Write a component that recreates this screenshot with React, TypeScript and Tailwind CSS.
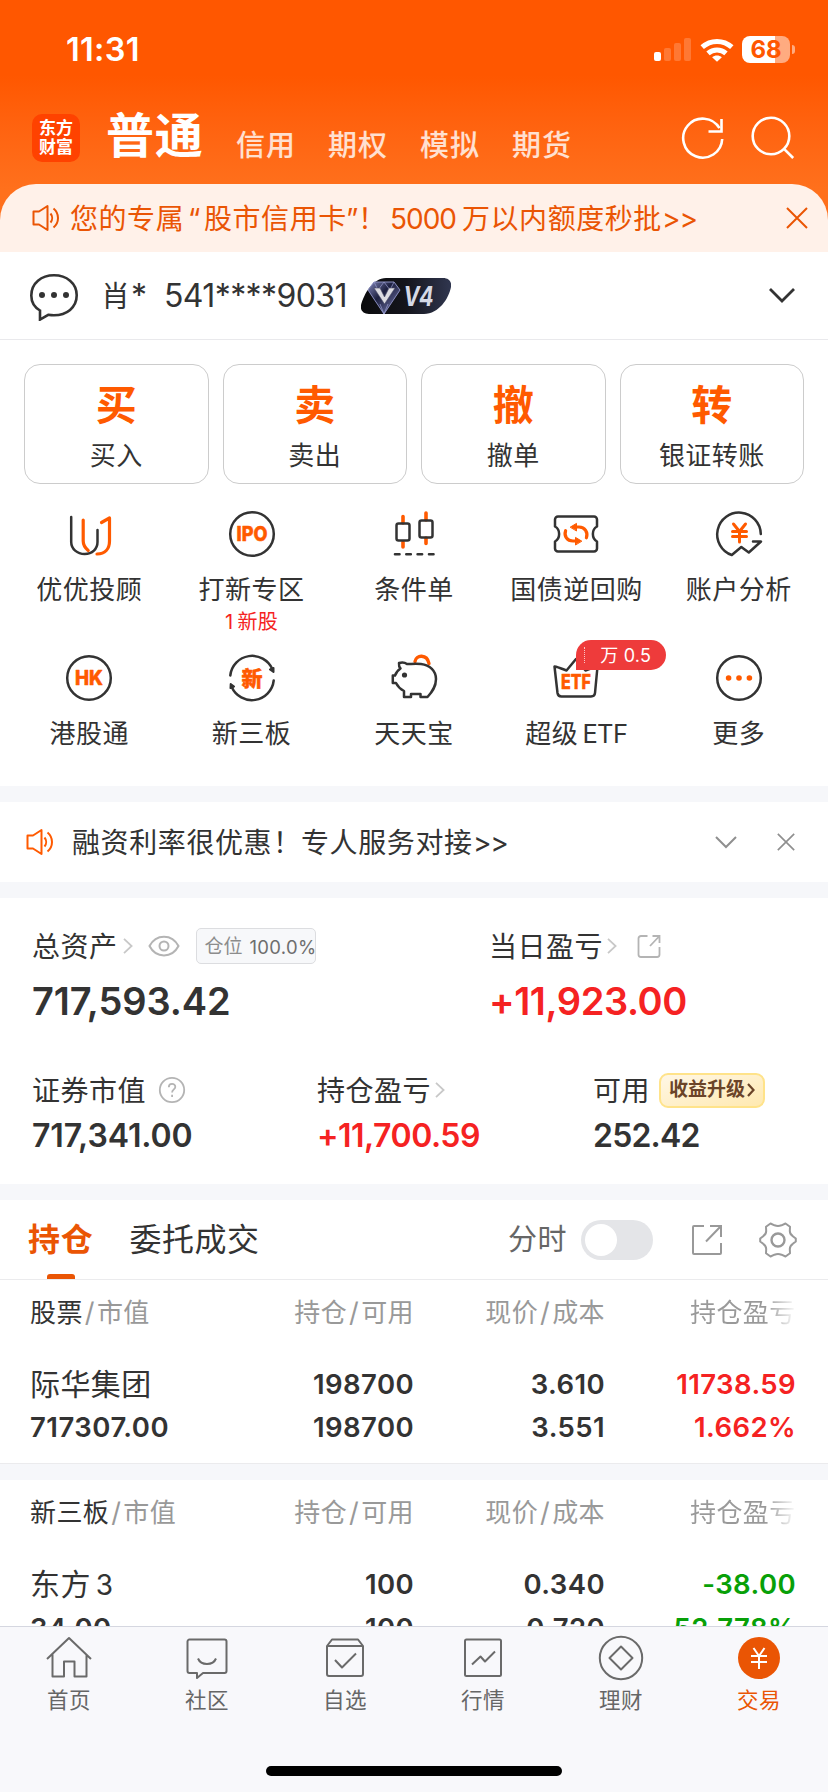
import React from 'react';
import clsx from 'clsx';

interface ShortcutItem {
  label: React.ReactNode;
  icon: React.ReactNode;
  note?: React.ReactNode;
  badge?: string;
}

interface HoldingRow {
  name: React.ReactNode;
  value: string;
  amount: [string, string];
  price: [string, string];
  profit: [string, string];
  down?: boolean;
}

const ACCENT = '#ff5a00';
const INK = '#333333';

function Speaker({ className }: { className?: string }) {
  return (
    <svg viewBox="0 0 28 28" fill="none" stroke="currentColor" strokeWidth="2" className={className}>
      <path d="M1.5 7.5H7L15.5 2v24L7 20.5H1.5z" strokeLinejoin="round" />
      <path d="M18.5 9.5c2.2 2.6 2.2 6.4 0 9M21.500 4.500c6 5 6 14 0 19" />
    </svg>
  );
}

function Cross({ className }: { className?: string }) {
  return (
    <svg viewBox="0 0 22 22" fill="none" stroke="currentColor" strokeWidth="2" className={className}>
      <path d="M1 1l20 20M21 1L1 21" />
    </svg>
  );
}

function ArrowRight() {
  return (
    <svg viewBox="0 0 10 16" fill="none" stroke="#c8c8c8" strokeWidth="1.8" className="h-4 w-2.5 shrink-0">
      <path d="M1 .8L8.6 8 1 15.2" />
    </svg>
  );
}

function StatusBar() {
  return (
    <div className="flex h-[99px] items-center justify-between pl-[66px] pr-[33px]">
      <span className="text-[32.5px] leading-8 font-semibold tracking-[0.3px] text-white">11:31</span>
      <div className="flex items-center">
        <svg viewBox="0 0 37 23" fill="#fff" className="mr-[9px] h-[23px] w-[37px]">
          <rect x="0" y="14" width="7" height="9" rx="2" />
          <rect x="10" y="10" width="7" height="13" rx="2" opacity=".2" />
          <rect x="20" y="5" width="7" height="18" rx="2" opacity=".2" />
          <rect x="30" y="0" width="7" height="23" rx="2" opacity=".2" />
        </svg>
        <svg viewBox="0 0 34 24" fill="none" stroke="#fff" strokeWidth="5" className="mr-[8px] h-6 w-[34px]">
          <path d="M2.2 9.2c8.4-7.7 21.2-7.7 29.6 0" />
          <path d="M8 15.4c5.2-4.6 12.8-4.6 18 0" />
          <path d="M17 23.8l-4.9-4.6c2.8-2.3 7-2.3 9.8 0z" fill="#fff" stroke="none" />
        </svg>
        <div className="flex h-[27px] w-12 items-center justify-center rounded-[8px] bg-linear-to-r from-white from-69% to-[#ffab80] to-69% text-[24px] leading-none font-bold text-[#ff5700]">
          68
        </div>
        <div className="ml-[2px] h-[9px] w-[3px] rounded-r-full bg-white/50" />
      </div>
    </div>
  );
}

function Header() {
  return (
    <div className="flex h-[85px] pl-8">
      <div className="mt-[15px] flex h-12 w-12 flex-col items-center justify-center rounded-[10px] bg-[#ff4200] text-[17px] leading-[19px] font-bold text-white">
        <span>东方</span>
        <span>财富</span>
      </div>
      <span className="mt-[7px] ml-[26px] w-[97px] text-[48px] leading-[60px] font-semibold tracking-[0.8px] whitespace-nowrap text-white">普通</span>
      <div className="mt-[27px] ml-[33px] flex gap-8 text-[29px] leading-10 font-medium tracking-[1px] text-white/80">
        <span>信用</span>
        <span>期权</span>
        <span>模拟</span>
        <span>期货</span>
      </div>
      <svg viewBox="0 0 44 44" fill="none" stroke="#fff" strokeWidth="2.6" className="mt-[17px] ml-[109px] h-11 w-11">
        <path d="M41.2 23A19.5 19.5 0 1 1 38.5 12.2" />
        <path d="M40.5 3v12.5H27.5" />
      </svg>
      <svg viewBox="0 0 44 44" fill="none" stroke="#fff" strokeWidth="2.6" className="mt-[17px] ml-[26px] h-11 w-11">
        <circle cx="20" cy="20" r="18.3" />
        <path d="M33 32.8l9.2 9.2" />
      </svg>
    </div>
  );
}

function Banner() {
  return (
    <div className="flex h-[68px] items-center rounded-t-[36px] bg-[#fff1e9] pl-8 text-[#ea5504]">
      <Speaker className="h-7 w-7" />
      <div className="ml-[10px] flex pt-px text-[28px] leading-10 tracking-[0.55px] whitespace-nowrap">
        <span className="w-[118px]">您的专属</span>
        <span className="w-[16px]">“</span>
        <span className="w-[142px]">股市信用卡</span>
        <span className="w-[12px]">”</span>
        <span className="w-[32px]">！</span>
        <span className="w-[72px] tracking-[-1px]">5000</span>
        <span className="w-[200px]">万以内额度秒批</span>
        <span className="tracking-[-1px]">&gt;&gt;</span>
      </div>
      <Cross className="mr-5 ml-auto h-[22px] w-[22px]" />
    </div>
  );
}

function LevelBadge() {
  return (
    <svg viewBox="0 0 90 36" className="ml-[16px] h-9 w-[90px]">
      <defs>
        <linearGradient id="level" x1="0" x2="1">
          <stop offset="0" stopColor="#0b0b0d" />
          <stop offset=".5" stopColor="#14151c" />
          <stop offset="1" stopColor="#30364f" />
        </linearGradient>
        <linearGradient id="gem" x1="0" x2="1" y1="0" y2="1">
          <stop offset="0" stopColor="#8286b8" />
          <stop offset=".4" stopColor="#1d2040" />
          <stop offset="1" stopColor="#7f83b8" />
        </linearGradient>
      </defs>
      <path d="M25 0h57c6 0 9 4 8 9-2 11-12 27-27 27H8c-6 0-9-4-8-9C3 16 12 0 25 0z" fill="url(#level)" />
      <path d="M13 4h20l6 8-16 24L7 12z" fill="url(#gem)" />
      <path d="M13 4h20l6 8-16 24L7 12z" fill="none" stroke="#8a8ec0" strokeWidth="1" />
      <path d="M13 4l4 8 6-8 6 8 4-8M19 26l4 10 4-10" fill="none" stroke="#9a9ed0" strokeWidth=".7" />
      <path d="M13 10h6l4.500 9 4.500-9h6L23.500 26z" fill="#dcdce2" stroke="#4a4c66" strokeWidth=".6" />
      <text x="42.500" y="28" fill="#d5d9e6" fontSize="27" fontWeight="700" fontStyle="italic" textLength="30" lengthAdjust="spacingAndGlyphs" className="font-['Inter',sans-serif]">
        V4
      </text>
    </svg>
  );
}

function AccountRow() {
  return (
    <div className="flex h-[88px] items-center border-b border-[#e9e9ec] pl-[29px]">
      <svg viewBox="0 0 50 50" fill="none" stroke={INK} strokeWidth="2.6" className="h-[50px] w-[50px]">
        <path d="M11 39.5C5 36 2.3 30.500 2.300 24.500 2.300 12 12.500 4.300 25 4.300s22.700 7.700 22.700 20-10.200 20-22.700 20c-2 0-4-.200-5.800-.500L11 48.600z" />
        <circle cx="13" cy="24" r="3" fill={INK} stroke="none" />
        <circle cx="25" cy="24" r="3" fill={INK} stroke="none" />
        <circle cx="37" cy="24" r="3" fill={INK} stroke="none" />
      </svg>
      <span className="mt-0.5 ml-[22px] w-[63px] text-[29px] leading-10">
        肖<span className="ml-px text-[32px]">*</span>
      </span>
      <span className="mt-px w-[181px] text-[32px] leading-10 tracking-[-0.6px] whitespace-nowrap">541****9031</span>
      <LevelBadge />
      <svg viewBox="0 0 26 15" fill="none" stroke={INK} strokeWidth="2.8" className="mr-[33px] ml-auto h-[15px] w-[26px]">
        <path d="M1 1l12 12L25 1" />
      </svg>
    </div>
  );
}

const trades = [
  { mark: '买', label: '买入' },
  { mark: '卖', label: '卖出' },
  { mark: '撤', label: '撤单' },
  { mark: '转', label: '银证转账' },
];

function TradeButtons() {
  return (
    <div className="grid grid-cols-4 gap-[14px] px-6 pt-6">
      {trades.map((item) => (
        <button key={item.mark} type="button" className="flex h-[120px] flex-col items-center rounded-2xl border border-[#cccccc] bg-white pt-[15px]">
          <span className="text-[41px] leading-[50px] font-semibold text-[#ff5a00]">{item.mark}</span>
          <span className="mt-[7px] text-[26px] leading-[38px] tracking-[0.4px]">{item.label}</span>
        </button>
      ))}
    </div>
  );
}

function IconText({ children, size, y, width }: { children: string; size: number; y: number; width: number }) {
  return (
    <text
      x="25"
      y={y}
      fill={ACCENT}
      stroke={ACCENT}
      strokeWidth=".5"
      fontSize={size}
      fontWeight="800"
      textAnchor="middle"
      textLength={width}
      lengthAdjust="spacingAndGlyphs"
    >
      {children}
    </text>
  );
}

function ShortcutIcon({ children }: { children: React.ReactNode }) {
  return (
    <svg viewBox="0 0 50 50" fill="none" stroke={INK} strokeWidth="2.5" strokeLinecap="round" strokeLinejoin="round" className="h-[50px] w-[50px]">
      {children}
    </svg>
  );
}

const shortcuts: ShortcutItem[] = [
  {
    label: '优优投顾',
    icon: (
      <ShortcutIcon>
        <path d="M7.200 8v25c0 7 6 12 13.500 12S33.500 40 33.500 33V21" />
        <path d="M19.200 11v21c0 4 2 7 5 9.500M37.500 13.500L45.500 9v23c0 8-4.500 13-12.500 13" stroke={ACCENT} strokeWidth="3.200" />
      </ShortcutIcon>
    ),
  },
  {
    label: '打新专区',
    note: (
      <>
        1<span className="ml-[4px]">新股</span>
      </>
    ),
    icon: (
      <ShortcutIcon>
        <circle cx="25" cy="25" r="21.800" />
        <IconText size={20} y={32} width={31}>IPO</IconText>
      </ShortcutIcon>
    ),
  },
  {
    label: '条件单',
    icon: (
      <ShortcutIcon>
        <path d="M14 7.500V14M14 33v5M37 4v7M37 29v5.500" stroke={ACCENT} strokeWidth="3.600" />
        <rect x="7.500" y="14.500" width="13" height="17" rx="2" />
        <rect x="30.500" y="11.500" width="13" height="17" rx="2" />
        <path d="M6 45.300h4.500M17.300 45.300h4.500M28.600 45.300h4.500M40 45.300h4.500" strokeWidth="2.600" />
      </ShortcutIcon>
    ),
  },
  {
    label: '国债逆回购',
    icon: (
      <ShortcutIcon>
        <path d="M7 7.500h36a3 3 0 0 1 3 3v7c-5.500 3-5.500 12 0 15v7a3 3 0 0 1-3 3H7a3 3 0 0 1-3-3v-7c5.500-3 5.500-12 0-15v-7a3 3 0 0 1 3-3z" />
        <path d="M14.600 21.700c-1.800 5.300 1.400 10.300 7.400 10.300h5M35.400 28.800c1.800-5.300-1.400-10.800-7.400-10.800h-5" stroke={ACCENT} strokeWidth="3.200" />
        <path d="M19.500 18l6-3.600v7.200zM30.500 32l-6-3.600v7.200z" fill={ACCENT} stroke={ACCENT} strokeWidth="1" />
      </ShortcutIcon>
    ),
  },
  {
    label: '账户分析',
    icon: (
      <ShortcutIcon>
        <path d="M46.800 25a21.800 21.800 0 1 0-29 21l9.500-8 7.500 5.500L47 32.500h-8" />
        <path d="M19.500 15l6 7.500 6-7.500M25.500 22.500V33M18.500 22.500h14M18.500 27.500h14" stroke={ACCENT} strokeWidth="3" />
      </ShortcutIcon>
    ),
  },
  {
    label: '港股通',
    icon: (
      <ShortcutIcon>
        <circle cx="25" cy="25" r="21.800" />
        <IconText size={20} y={32} width={28}>HK</IconText>
      </ShortcutIcon>
    ),
  },
  {
    label: '新三板',
    icon: (
      <ShortcutIcon>
        <path d="M3.300 22.500a22 22 0 0 1 42-6.500M46.700 27.500a22 22 0 0 1-42 6.500" />
        <path d="M43 16.500l3.500-1.500v4zM7 33.500L3.500 35l.2-4z" fill={INK} strokeWidth="2" />
        <IconText size={21} y={32.5} width={21}>新</IconText>
      </ShortcutIcon>
    ),
  },
  {
    label: '天天宝',
    icon: (
      <ShortcutIcon>
        <path d="M26 8.500c1-7 12-7.500 14 2" stroke={ACCENT} strokeWidth="3.400" />
        <path d="M10 10c3-1 6-.5 8 1 4 0 9-.5 14 0 9 1 15 7 15 15 0 8-4 13-8.500 18h-7v-3H22v3h-7v-6c-4-2-6.500-5-8-8H3.800v-7.500H6c1-3 2.500-5 5.500-7C10 14 9.800 12 10 10z" />
        <circle cx="15.500" cy="22" r="2.600" fill={INK} stroke="none" />
      </ShortcutIcon>
    ),
  },
  {
    label: (
      <>
        超级<span className="ml-[4px] text-[25.5px] tracking-[-0.6px]">ETF</span>
      </>
    ),
    badge: '万 0.5',
    icon: (
      <ShortcutIcon>
        <path d="M3.500 13.500c4 .5 9 3 12 4L25 6l9.500 11.500c3-1 8-3.500 12-4L44 40c-.2 2.500-1.500 3.500-4 3.500H10.500c-2.500 0-3.600-1-4-3.500z" />
        <IconText size={20} y={36} width={30}>ETF</IconText>
      </ShortcutIcon>
    ),
  },
  {
    label: '更多',
    icon: (
      <ShortcutIcon>
        <circle cx="25" cy="25" r="21.800" />
        <g fill={ACCENT} stroke="none">
          <circle cx="14.600" cy="25" r="2.800" />
          <circle cx="25" cy="25" r="2.800" />
          <circle cx="35.400" cy="25" r="2.800" />
        </g>
      </ShortcutIcon>
    ),
  },
];

function Shortcuts() {
  return (
    <div className="grid grid-cols-5 px-2 pt-[25px]">
      {shortcuts.map((item, index) => (
        <div key={index} className="relative flex h-36 flex-col items-center">
          {item.icon}
          <span className="mt-3 text-[26px] leading-[38px] tracking-[0.5px] whitespace-nowrap">{item.label}</span>
          {item.note && <span className="text-[20px] leading-[26px] tracking-[0.4px] text-[#f52222]">{item.note}</span>}
          {item.badge && (
            <span className="absolute -top-[13px] left-[81px] flex h-[30px] w-[90px] items-center rounded-[15px] rounded-bl-none bg-[#ee3b3b] pl-[8px] text-[18px] tracking-[0.2px] text-white">
              <span className="mr-[15px] h-4 border-l border-dotted border-white/70" />
              {item.badge}
            </span>
          )}
        </div>
      ))}
    </div>
  );
}

function Notice() {
  return (
    <div className="flex h-20 items-center pl-[25px]">
      <Speaker className="h-7 w-[30px] text-[#ff5a00]" />
      <div className="ml-[17px] flex pt-px text-[28px] leading-10 tracking-[0.6px] whitespace-nowrap">
        <span className="w-[201px]">融资利率很优惠</span>
        <span className="w-[28px]">！</span>
        <span className="w-[172px]">专人服务对接</span>
        <span className="tracking-[-1.2px]">&gt;&gt;</span>
      </div>
      <svg viewBox="0 0 22 13" fill="none" stroke="#8f8f8f" strokeWidth="2" className="mr-10 ml-auto h-[13px] w-[22px]">
        <path d="M1 1l10 10L21 1" />
      </svg>
      <Cross className="mr-[33px] h-[18px] w-[18px] text-[#8f8f8f]" />
    </div>
  );
}

function Divider() {
  return <div className="h-4 bg-[#f6f7fa]" />;
}

function ShareIcon() {
  return (
    <svg viewBox="0 0 24 24" fill="none" stroke="#b4b4b4" strokeWidth="1.800" className="h-6 w-6">
      <path d="M10.500 2H4a2.500 2.500 0 0 0-2.500 2.500v16A2.500 2.500 0 0 0 4 23h16a2.500 2.500 0 0 0 2.500-2.500V13M13 12L22 2.500M15.500 2H22.500v7" />
    </svg>
  );
}

function Assets() {
  return (
    <div className="h-[286px] pt-7">
      <div className="flex">
        <div className="w-[457px] pl-8">
          <div className="flex h-10 items-center">
            <span className="pt-px text-[28px] tracking-[0.5px]">总资产</span>
            <span className="ml-[5px] flex"><ArrowRight /></span>
            <svg viewBox="0 0 32 22" fill="none" stroke="#b4b4b4" strokeWidth="2" className="ml-[15px] h-[22px] w-8">
              <path d="M1.500 11C8-1.500 24-1.500 30.500 11 24 23.500 8 23.500 1.500 11z" />
              <circle cx="16" cy="11" r="4.500" />
            </svg>
            <span className="ml-4 flex h-9 w-[120px] items-center rounded-[5px] border border-[#dcdde0] bg-[#f7f8fa] pt-[3px] pl-[8px] text-[19px] whitespace-nowrap text-[#8c8c8c]">
              仓位<span className="ml-[7px] text-[18.5px] tracking-[0.3px] text-[#6e6e6e]">100.0%</span>
            </span>
          </div>
          <div className="mt-3 text-[38px] leading-[46px] font-semibold tracking-[-0.1px]">717,593.42</div>
        </div>
        <div className="pl-8">
          <div className="flex h-10 items-center">
            <span className="pt-px text-[28px] tracking-[0.5px]">当日盈亏</span>
            <span className="ml-[4px] flex"><ArrowRight /></span>
            <span className="ml-5"><ShareIcon /></span>
          </div>
          <div className="mt-3 text-[38px] leading-[46px] font-semibold tracking-[-0.4px] text-[#f52222]">+11,923.00</div>
        </div>
      </div>
      <div className="mt-[46px] flex">
        <div className="w-[285px] pl-8">
          <div className="flex h-10 items-center">
            <span className="pt-px text-[28px] tracking-[0.5px]">证券市值</span>
            <svg viewBox="0 0 28 28" fill="none" stroke="#b4b4b4" strokeWidth="1.800" className="ml-3 h-7 w-7">
              <circle cx="14" cy="14" r="12.200" />
              <path d="M10.800 11.200c0-4.500 6.600-4.300 6.500-.2 0 2.400-3.200 2.500-3.200 5.500M14.100 18.700v2.400" />
            </svg>
          </div>
          <div className="mt-[6px] text-[32px] leading-10 font-semibold tracking-[-0.1px]">717,341.00</div>
        </div>
        <div className="w-[276px] pl-8">
          <div className="flex h-10 items-center">
            <span className="pt-px text-[28px] tracking-[0.5px]">持仓盈亏</span>
            <span className="ml-[4px] flex"><ArrowRight /></span>
          </div>
          <div className="mt-[6px] text-[32px] leading-10 font-semibold tracking-[-0.5px] text-[#f52222]">+11,700.59</div>
        </div>
        <div className="pl-8">
          <div className="flex h-10 items-center">
            <span className="pt-px text-[28px] tracking-[0.5px]">可用</span>
            <span className="ml-[9px] flex h-[35px] w-[106px] items-center rounded-[9px] border-2 border-[#ffe38a] bg-linear-to-br from-[#fff7e6] to-[#ffe9b0] pl-[8px] text-[19px] font-bold text-[#6b4428]">
              收益升级
              <svg viewBox="0 0 8 14" fill="none" stroke="#6b4428" strokeWidth="2.200" className="ml-[2px] h-3.5 w-2">
                <path d="M1 1l5.500 6L1 13" />
              </svg>
            </span>
          </div>
          <div className="mt-[6px] text-[32px] leading-10 font-semibold tracking-[-0.8px]">252.42</div>
        </div>
      </div>
    </div>
  );
}

function HoldingTabs() {
  return (
    <div className="flex h-20 items-center border-b border-[#ebebed] pl-7">
      <div className="relative text-[32px] leading-[44px] font-semibold tracking-[0.8px] text-[#ea5504]">
        持仓
        <span className="absolute top-[56px] left-[19px] h-[5px] w-7 rounded-t-[3px] bg-[#ea5504]" />
      </div>
      <span className="ml-9 text-[32px] leading-[44px] tracking-[0.5px]">委托成交</span>
      <span className="ml-auto text-[29px] leading-[40px] tracking-[0.5px] text-[#666666]">分时</span>
      <div className="ml-[14px] flex h-10 w-[72px] items-center rounded-full bg-[#e4e5e8] pl-1">
        <div className="h-8 w-8 rounded-full bg-white" />
      </div>
      <svg viewBox="0 0 32 32" fill="none" stroke="#999999" strokeWidth="2" className="ml-[38px] h-8 w-8">
        <path d="M13 2H3a1 1 0 0 0-1 1v26a1 1 0 0 0 1 1h26a1 1 0 0 0 1-1V19M15 17.500L29.500 2.500M19 2H30V13" />
      </svg>
      <svg viewBox="0 0 38 38" fill="none" stroke="#999999" strokeWidth="2" strokeLinejoin="round" className="mr-[31px] ml-[36px] h-[38px] w-[38px]">
        <path d="M11.500 2.500l4 1.800c2 .8 5 .8 7 0l4-1.800 4.500 3.200-.2 4.300c0 2 1.200 4 3 5.200l3 2.300v3l-3 2.300c-1.800 1.200-3 3.200-3 5.200l.2 4.300-4.500 3.200-4-1.800c-2-.8-5-.8-7 0l-4 1.800L7 32.300l.2-4.300c0-2-1.200-4-3-5.200l-3-2.300v-3l3-2.300c1.800-1.200 3-3.200 3-5.200L7 5.700z" />
        <circle cx="19" cy="19" r="6.500" strokeWidth="2.400" />
      </svg>
    </div>
  );
}

function PairLabel({ left, right, strong }: { left: string; right: string; strong?: boolean }) {
  return (
    <span>
      <span className={clsx(strong && 'text-[#333333]')}>{left}</span>
      <span className="mx-[2px] text-[27px]">/</span>
      {right}
    </span>
  );
}

function HoldingTable({ title, row }: { title: string; row: HoldingRow }) {
  return (
    <div className="h-[183px] pt-[13px]">
      <div className="grid grid-cols-[150px_234px_191px_192px] pl-[30px] text-[26px] leading-10 tracking-[0.4px] whitespace-nowrap text-[#999999]">
        <PairLabel left={title} right="市值" strong />
        <span className="text-right"><PairLabel left="持仓" right="可用" /></span>
        <span className="text-right"><PairLabel left="现价" right="成本" /></span>
        <span className="ml-[85px] overflow-hidden bg-linear-to-r from-[#999999] from-70% to-transparent bg-clip-text text-transparent">持仓盈亏</span>
      </div>
      <div className="mt-[30px] grid grid-cols-[150px_234px_191px_191px] pl-[30px] text-right text-[27.5px] leading-[43px] font-semibold tracking-[0.4px] whitespace-nowrap">
        <span className="text-left text-[30px] font-normal">{row.name}</span>
        <span>{row.amount[0]}</span>
        <span>{row.price[0]}</span>
        <span className={row.down ? 'text-[#08a008]' : 'text-[#f52222]'}>{row.profit[0]}</span>
        <span className="text-left tracking-[0.5px]">{row.value}</span>
        <span>{row.amount[1]}</span>
        <span>{row.price[1]}</span>
        <span className={row.down ? 'text-[#08a008]' : 'text-[#f52222]'}>{row.profit[1]}</span>
      </div>
    </div>
  );
}

function TabIcon({ children }: { children: React.ReactNode }) {
  return (
    <svg viewBox="0 0 46 46" fill="none" stroke="#6a6a6a" strokeWidth="2" strokeLinejoin="round" className="h-[46px] w-[46px]">
      {children}
    </svg>
  );
}

const tabs = [
  {
    label: '首页',
    icon: (
      <TabIcon>
        <path d="M1 24L23 3l22 21M6.500 19.500V41.500H18V26.500h10.500v15H40.500v-22" />
      </TabIcon>
    ),
  },
  {
    label: '社区',
    icon: (
      <TabIcon>
        <path d="M5.500 4.500h35a2 2 0 0 1 2 2v29.500a2 2 0 0 1-2 2H19l-6 5V38H5.500a2 2 0 0 1-2-2V6.500a2 2 0 0 1 2-2z" />
        <path d="M14 23.500c3 7.300 15 7.300 18 0" />
      </TabIcon>
    ),
  },
  {
    label: '自选',
    icon: (
      <TabIcon>
        <path d="M5 11l5-6.500h26L41 11v28a2 2 0 0 1-2 2H7a2 2 0 0 1-2-2zM5 11h36M13 25l7 7.500L34 18.500" />
      </TabIcon>
    ),
  },
  {
    label: '行情',
    icon: (
      <TabIcon>
        <rect x="5" y="4.500" width="36" height="36.500" rx="1.500" />
        <path d="M12 29.500l8.500-8 4.500 5L35 16.500" />
      </TabIcon>
    ),
  },
  {
    label: '理财',
    icon: (
      <TabIcon>
        <circle cx="23" cy="23" r="21.200" />
        <path d="M23 11.500L34.500 23 23 34.500 11.500 23z" />
      </TabIcon>
    ),
  },
  {
    label: '交易',
    active: true,
    icon: (
      <TabIcon>
        <circle cx="23" cy="23" r="21" fill="#ea5504" stroke="none" />
        <path d="M17.500 13l5.500 8 5.500-8M23 21v13M15 21h16M15 27h16" stroke="#fff" />
      </TabIcon>
    ),
  },
];

function TabBar() {
  return (
    <div className="flex h-[166px] shrink-0 flex-col border-t border-[#d5d7e0] bg-[#f8f8fb]">
      <div className="grid grid-cols-6 pt-2">
        {tabs.map((tab) => (
          <div key={tab.label} className={clsx('flex flex-col items-center', tab.active ? 'text-[#ea5504]' : 'text-[#666666]')}>
            {tab.icon}
            <span className="mt-1 text-[21.5px] leading-[30px] tracking-[0.4px]">{tab.label}</span>
          </div>
        ))}
      </div>
      <div className="mx-auto mt-auto mb-4 h-[10px] w-[296px] rounded-full bg-black" />
    </div>
  );
}

export default function App() {
  return (
    <div className="flex h-[1792px] w-[828px] flex-col overflow-hidden bg-white font-['Inter','Noto_Sans_CJK_SC',sans-serif] text-[#333333]">
      <div className="flex min-h-0 flex-1 flex-col overflow-hidden *:shrink-0">
        <div className="bg-linear-to-b from-[#ff5700] from-30% to-[#ff701c] to-75%">
          <StatusBar />
          <Header />
          <Banner />
        </div>
        <AccountRow />
        <div className="h-[446px]">
          <TradeButtons />
          <Shortcuts />
        </div>
        <Divider />
        <Notice />
        <Divider />
        <Assets />
        <Divider />
        <HoldingTabs />
        <HoldingTable
          title="股票"
          row={{
            name: '际华集团',
            value: '717307.00',
            amount: ['198700', '198700'],
            price: ['3.610', '3.551'],
            profit: ['11738.59', '1.662%'],
          }}
        />
        <div className="h-[17px] border-t border-[#ebebed] bg-[#f6f7fa]" />
        <HoldingTable
          title="新三板"
          row={{
            name: <>东方<span className="ml-[5px] text-[28px]">3</span></>,
            value: '34.00',
            amount: ['100', '100'],
            price: ['0.340', '0.720'],
            profit: ['-38.00', '52.778%'],
            down: true,
          }}
        />
      </div>
      <TabBar />
    </div>
  );
}
